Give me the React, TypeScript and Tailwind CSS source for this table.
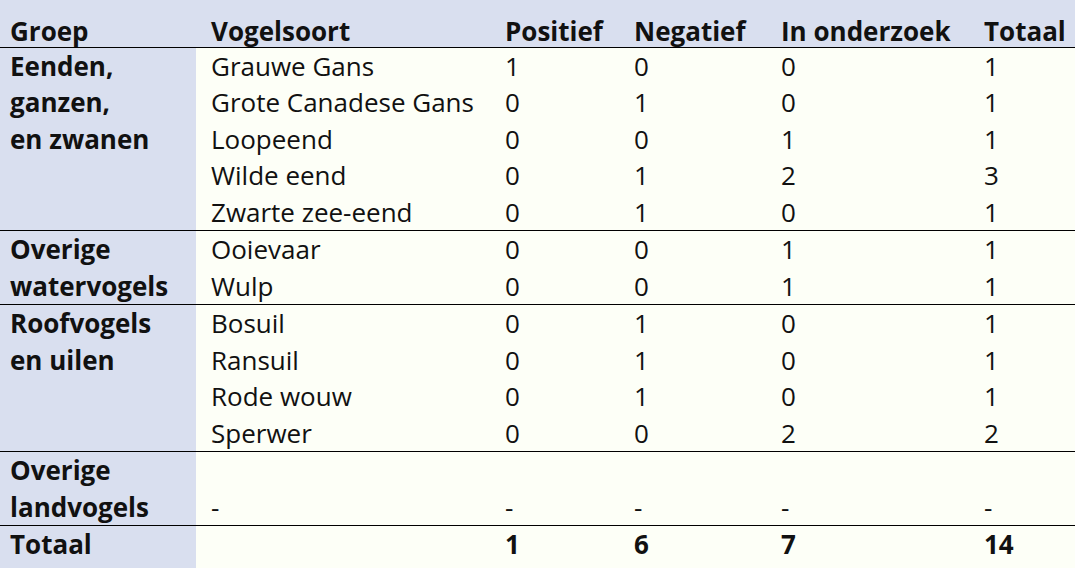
type Row = { soort: string; pos: string; neg: string; ond: string; tot: string };
type Group = { naam: string[]; rows: Row[] };

const groups: Group[] = [
  {
    naam: ["Eenden,", "ganzen,", "en zwanen"],
    rows: [
      { soort: "Grauwe Gans", pos: "1", neg: "0", ond: "0", tot: "1" },
      { soort: "Grote Canadese Gans", pos: "0", neg: "1", ond: "0", tot: "1" },
      { soort: "Loopeend", pos: "0", neg: "0", ond: "1", tot: "1" },
      { soort: "Wilde eend", pos: "0", neg: "1", ond: "2", tot: "3" },
      { soort: "Zwarte zee-eend", pos: "0", neg: "1", ond: "0", tot: "1" },
    ],
  },
  {
    naam: ["Overige", "watervogels"],
    rows: [
      { soort: "Ooievaar", pos: "0", neg: "0", ond: "1", tot: "1" },
      { soort: "Wulp", pos: "0", neg: "0", ond: "1", tot: "1" },
    ],
  },
  {
    naam: ["Roofvogels", "en uilen"],
    rows: [
      { soort: "Bosuil", pos: "0", neg: "1", ond: "0", tot: "1" },
      { soort: "Ransuil", pos: "0", neg: "1", ond: "0", tot: "1" },
      { soort: "Rode wouw", pos: "0", neg: "1", ond: "0", tot: "1" },
      { soort: "Sperwer", pos: "0", neg: "0", ond: "2", tot: "2" },
    ],
  },
  {
    naam: ["Overige", "landvogels"],
    rows: [{ soort: "-", pos: "-", neg: "-", ond: "-", tot: "-" }],
  },
];

const cell = "align-bottom p-0 pl-[10px] whitespace-nowrap";

export default function App() {
  return (
    <div className="w-[1075px] h-[568px] overflow-hidden bg-[#fdfff7] text-[#111] font-['Open_Sans',sans-serif] text-[26px] leading-[36.5px]">
      <table className="w-[1075px] table-fixed border-collapse">
        <colgroup>
          <col className="w-[196px]" />
          <col className="w-[299px]" />
          <col className="w-[129px]" />
          <col className="w-[147px]" />
          <col className="w-[203px]" />
          <col className="w-[101px]" />
        </colgroup>
        <thead>
          <tr className="h-[47px] bg-[#d9dfef] font-bold border-b border-black leading-[31px]">
            <th className={`${cell} text-left`}>Groep</th>
            <th className={`${cell} text-left pl-[15px]`}>Vogelsoort</th>
            <th className={`${cell} text-left`}>Positief</th>
            <th className={`${cell} text-left`}>Negatief</th>
            <th className={`${cell} text-left`}>In onderzoek</th>
            <th className={`${cell} text-left`}>Totaal</th>
          </tr>
        </thead>
        <tbody>
          {groups.map((g) =>
            g.rows.map((r, i) => (
              <tr key={g.naam.join() + r.soort} className={i === 0 ? "border-t border-black" : ""}>
                {i === 0 ? (
                  <td rowSpan={g.rows.length} className="align-top p-0 pl-[10px] bg-[#d9dfef] font-bold">
                    {g.naam.map((n) => (
                      <div key={n}>{n}</div>
                    ))}
                  </td>
                ) : null}
                <td className={`${cell} pl-[15px]`}>{r.soort}</td>
                <td className={cell}>{r.pos}</td>
                <td className={cell}>{r.neg}</td>
                <td className={cell}>{r.ond}</td>
                <td className={cell}>{r.tot}</td>
              </tr>
            ))
          )}
          <tr className="border-t border-black font-bold h-[44px]">
            <td className={`${cell} align-top bg-[#d9dfef]`}>Totaal</td>
            <td className={cell}></td>
            <td className={`${cell} align-top`}>1</td>
            <td className={`${cell} align-top`}>6</td>
            <td className={`${cell} align-top`}>7</td>
            <td className={`${cell} align-top`}>14</td>
          </tr>
        </tbody>
      </table>
    </div>
  );
}
